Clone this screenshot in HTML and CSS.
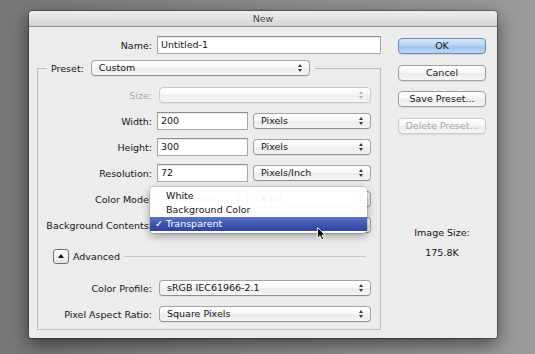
FILE: index.html
```html
<!DOCTYPE html>
<html>
<head>
    <title>New</title>
    <link rel="stylesheet" href="styles.css">
</head>
<body>
    <div class="dialog">
        <div class="titlebar">New</div>

        <div class="dialog-body">
            <div class="main">
                <div class="name-row">
                    <span class="label name-label">Name:</span>
                    <div class="textbox name-box">Untitled-1</div>
                </div>

                <fieldset class="preset-group">
                    <legend class="preset-legend">
                        <span>Preset:</span>
                        <div class="popup preset-popup">Custom</div>
                    </legend>

                    <div class="rows">
                        <div class="row">
                            <span class="label disabled">Size:</span>
                            <div class="popup popup-full disabled"></div>
                        </div>

                        <div class="row">
                            <span class="label">Width:</span>
                            <div class="textbox small-box">200</div>
                            <div class="popup unit-popup">Pixels</div>
                        </div>

                        <div class="row">
                            <span class="label">Height:</span>
                            <div class="textbox small-box">300</div>
                            <div class="popup unit-popup">Pixels</div>
                        </div>

                        <div class="row">
                            <span class="label">Resolution:</span>
                            <div class="textbox small-box">72</div>
                            <div class="popup unit-popup">Pixels/Inch</div>
                        </div>

                        <div class="row">
                            <span class="label">Color Mode:</span>
                            <div class="popup mode-popup">RGB Color</div>
                            <div class="popup unit-popup">8 bit</div>
                        </div>

                        <div class="row menu-row">
                            <span class="label">Background Contents:</span>
                            <div class="popup popup-full">Transparent</div>

                            <!-- open popup menu for Background Contents -->
                            <div class="popup-menu">
                                <div class="menu-item"><span class="check"></span>White</div>
                                <div class="menu-item"><span class="check"></span>Background Color</div>
                                <div class="menu-item selected"><span class="check">✓</span>Transparent</div>
                                <svg class="cursor" width="9" height="14" viewBox="0 0 9 14">
                                    <path d="M0.6 0.6 L0.6 11 L3 8.7 L4.8 12.8 L6.6 12 L4.9 8 L8.2 8 Z" fill="#000" stroke="#fff" stroke-width="0.9" stroke-linejoin="round"/>
                                </svg>
                            </div>
                        </div>

                        <div class="disclosure-row">
                            <div class="disclosure"><span class="tri"></span></div>
                            <span class="disclosure-text">Advanced</span>
                            <div class="separator"></div>
                        </div>

                        <div class="row profile-row">
                            <span class="label">Color Profile:</span>
                            <div class="popup popup-full">sRGB IEC61966-2.1</div>
                        </div>

                        <div class="row">
                            <span class="label">Pixel Aspect Ratio:</span>
                            <div class="popup popup-full">Square Pixels</div>
                        </div>
                    </div>
                </fieldset>
            </div>

            <div class="side">
                <button class="btn btn-default">OK</button>
                <button class="btn">Cancel</button>
                <button class="btn">Save Preset...</button>
                <button class="btn disabled">Delete Preset...</button>

                <div class="image-size">
                    <div>Image Size:</div>
                    <div class="image-size-value">175.8K</div>
                </div>
            </div>
        </div>
    </div>
</body>
</html>
```

FILE: styles.css
```css
body {
    margin: 0;
    padding: 11px 0 0 29px;
    height: 354px;
    box-sizing: border-box;
    overflow: hidden;
    background: linear-gradient(to right, #767676, #888888 45%, #9b9b9b);
    font-family: "DejaVu Sans", sans-serif;
    font-size: 9.5px;
    color: #141414;
}

.dialog {
    width: 468px;
    height: 327px;
    background-color: #ececec;
    border-radius: 4px 4px 2px 2px;
    box-shadow: 0 6px 18px rgba(0, 0, 0, 0.55), 0 0 0 1px rgba(0, 0, 0, 0.3);
}

.titlebar {
    height: 15px;
    line-height: 15px;
    border-bottom: 1px solid #8d8d8d;
    border-radius: 4px 4px 0 0;
    background: linear-gradient(#eeeeee, #d3d3d3);
    text-align: center;
    color: #3b3b3b;
    text-shadow: 0 1px 0 rgba(255, 255, 255, 0.6);
}

.dialog-body {
    display: flex;
    gap: 17px;
    padding: 9px 11px 0 8px;
}

.main {
    width: 344px;
}

.label {
    flex: none;
    text-align: right;
    white-space: nowrap;
}

.disabled {
    color: #a9a9a9;
}

/* text fields */
.name-row {
    display: flex;
    align-items: center;
    height: 18px;
}

.name-label {
    width: 115px;
    margin-right: 5px;
}

.textbox {
    height: 18px;
    box-sizing: border-box;
    padding: 0 3px;
    line-height: 16px;
    background-color: #ffffff;
    border: 1px solid #a6a6a6;
    border-top-color: #8c8c8c;
    box-shadow: inset 0 1px 1px rgba(0, 0, 0, 0.1);
}

.name-box {
    width: 224px;
}

.small-box {
    width: 91px;
}

/* preset group */
.preset-group {
    margin: 6px 0 0;
    padding: 0 0 6px;
    width: 344px;
    box-sizing: border-box;
    border: 1px solid #bdbdbd;
}

.preset-legend {
    display: flex;
    align-items: center;
    gap: 7px;
    height: 16px;
    margin-left: 9px;
    padding: 0 5px 0 4px;
}

.preset-popup {
    width: 219px;
}

.rows {
    display: flex;
    flex-direction: column;
    padding-top: 10px;
}

.row {
    display: flex;
    align-items: center;
    height: 18px;
}

.row + .row {
    margin-top: 8px;
}

.row .label {
    width: 114px;
    margin-right: 5px;
}

/* popup buttons */
.popup {
    position: relative;
    height: 16px;
    box-sizing: border-box;
    padding-left: 7px;
    line-height: 14px;
    white-space: nowrap;
    border: 1px solid #a3a3a3;
    border-bottom-color: #8e8e8e;
    border-radius: 4px;
    background: linear-gradient(#ffffff, #f6f6f6 50%, #ececec 51%, #f4f4f4);
    box-shadow: 0 1px 0 rgba(0, 0, 0, 0.05);
}

.popup::before,
.popup::after {
    content: "";
    position: absolute;
    right: 7px;
    border-left: 2.5px solid transparent;
    border-right: 2.5px solid transparent;
}

.popup::before {
    top: 3px;
    border-bottom: 3px solid #3a3a3a;
}

.popup::after {
    bottom: 3px;
    border-top: 3px solid #3a3a3a;
}

.popup.disabled {
    border-color: #c9c9c9;
}

.popup.disabled::before {
    border-bottom-color: #b5b5b5;
}

.popup.disabled::after {
    border-top-color: #b5b5b5;
}

.popup-full {
    width: 212px;
    margin-left: 2px;
}

.unit-popup {
    width: 118px;
    margin-left: 5px;
}

.mode-popup {
    width: 89px;
    margin-left: 2px;
}

/* open menu */
.menu-row {
    position: relative;
}

.popup-menu {
    position: absolute;
    left: 112px;
    top: -29px;
    width: 217px;
    padding: 2px 0;
    border-radius: 4px;
    background-color: rgba(255, 255, 255, 0.95);
    box-shadow: 0 3px 8px rgba(0, 0, 0, 0.35), 0 0 0 1px rgba(0, 0, 0, 0.1);
    z-index: 2;
}

.menu-item {
    display: flex;
    height: 14px;
    line-height: 14px;
    padding-left: 5px;
}

.check {
    width: 11px;
}

.menu-item.selected {
    color: #ffffff;
    background: linear-gradient(#5b74c6, #3a52ad 60%, #2d45a2);
}

.cursor {
    position: absolute;
    left: 167px;
    top: 40px;
}

/* advanced disclosure */
.disclosure-row {
    display: flex;
    align-items: center;
    height: 16px;
    margin-top: 14px;
    padding: 0 14px 0 15px;
}

.disclosure {
    width: 16px;
    height: 15px;
    box-sizing: border-box;
    display: flex;
    align-items: center;
    justify-content: center;
    border: 1px solid #707070;
    border-radius: 3px;
    background: linear-gradient(#ffffff, #e3e3e3);
}

.tri {
    border-left: 3.5px solid transparent;
    border-right: 3.5px solid transparent;
    border-bottom: 4px solid #111111;
}

.disclosure-text {
    margin-left: 4px;
}

.separator {
    flex: 1;
    height: 1px;
    margin-left: 4px;
    background-color: #c6c6c6;
}

.profile-row {
    margin-top: 15px;
}

/* right column */
.side {
    width: 88px;
    display: flex;
    flex-direction: column;
    gap: 10.5px;
    padding-top: 2px;
}

.btn {
    height: 16px;
    padding: 0;
    font: inherit;
    color: inherit;
    line-height: 14px;
    border: 1px solid #9c9c9c;
    border-radius: 4px;
    background: linear-gradient(#ffffff, #f5f5f5 50%, #eaeaea 51%, #f6f6f6);
    box-shadow: 0 1px 1px rgba(0, 0, 0, 0.08);
}

.btn-default {
    border-color: #6487bb;
    background: linear-gradient(#d7e8f9, #b3d3f1 50%, #9bc4ed 51%, #bcdaf5);
}

.btn.disabled {
    color: #a9a9a9;
    border-color: #c8c8c8;
}

.image-size {
    margin-top: 83px;
    text-align: center;
    line-height: 12px;
}

.image-size-value {
    margin-top: 8px;
}
```
